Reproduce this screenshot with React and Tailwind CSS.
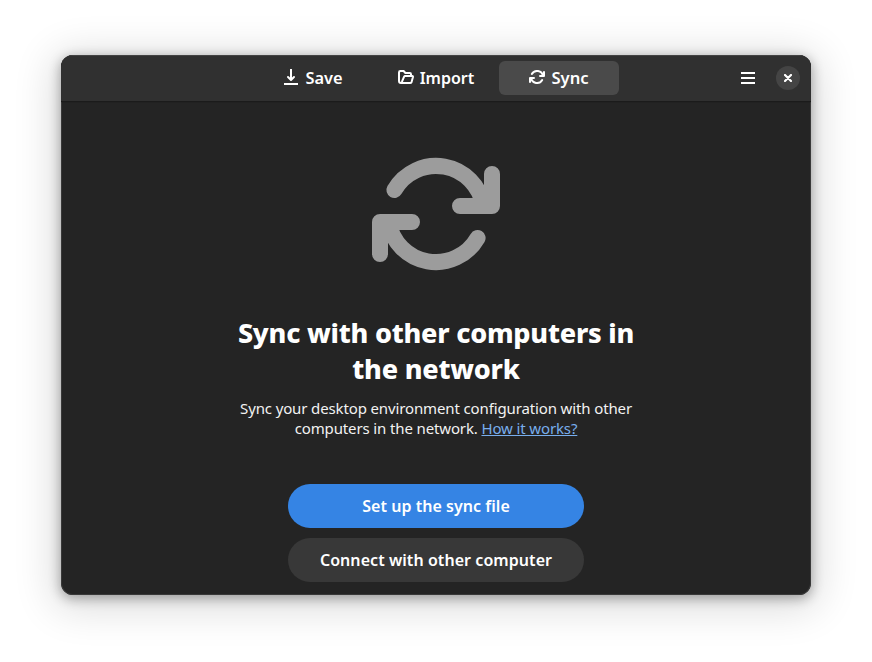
import React from "react";

function SyncIcon({ className }) {
  return (
    <svg
      viewBox="0 0 16 16"
      className={className}
      fill="none"
      stroke="currentColor"
      strokeWidth="2"
      strokeLinecap="round"
      strokeLinejoin="round"
    >
      <path d="M2.8 5A6 6 0 0 1 13.92 7M15 3V7H11" />
      <path d="M13.2 11A6 6 0 0 1 2.08 9M1 13V9H5" />
    </svg>
  );
}

function SaveIcon() {
  return (
    <svg viewBox="0 0 16 16" className="mb-0.5 size-4" fill="none" stroke="currentColor" strokeWidth="2">
      <path d="M8 0V10" />
      <path d="M5 8L8 11L11 8" strokeLinecap="round" strokeLinejoin="round" />
      <path d="M1 15H15" />
    </svg>
  );
}

function FolderIcon() {
  return (
    <svg viewBox="0 0 16 16" className="mb-0.5 size-4" fill="none" stroke="currentColor" strokeWidth="2" strokeLinejoin="round" strokeLinecap="round">
      <path d="M13 6V5.2Q13 4 11.9 4H7.4L5.6 2H2.4Q1 2 1 3.4V11.8Q1 14 3 14H12.2Q13.1 14 13.5 13.2L14.9 8.2Q15.2 7 14.2 7H7.3Q6.4 7 6 7.9L4.1 12.4" />
    </svg>
  );
}

function Tab({ icon, label, active, textClass }) {
  return (
    <button
      className={`flex h-[34px] w-[120px] items-center justify-center gap-1.5 rounded-md ${active ? "bg-[#4a4a4a]" : ""}`}
    >
      {icon}
      <span className={`leading-5 font-semibold ${textClass}`}>{label}</span>
    </button>
  );
}

export default function App() {
  return (
    <div className="h-[662px] w-[872px] overflow-hidden bg-white px-[61px] pt-[55px] font-['Noto_Sans',sans-serif] text-white">
      <div className="flex h-[540px] w-[750px] flex-col overflow-hidden rounded-xl bg-[#242424] shadow-[0_3px_12px_1px_rgba(0,0,0,0.3),0_6px_40px_8px_rgba(0,0,0,0.14),inset_0_0_0_1px_#393939]">
        <header className="flex h-[46px] shrink-0 items-center border-t border-[#444444] bg-[#303030] pr-[11px] pb-px pl-[192px] shadow-[0_1px_1px_#1b1b1b]">
          <nav className="flex gap-[3px]">
            <Tab icon={<SaveIcon />} label="Save" textClass="text-[16.4px]" />
            <Tab icon={<FolderIcon />} label="Import" textClass="text-[16px]" />
            <Tab icon={<SyncIcon className="mb-0.5 size-4" />} label="Sync" active textClass="text-[16.6px]" />
          </nav>
          <div className="ml-auto flex items-center gap-[21px]">
            <div className="flex w-3.5 flex-col gap-[3px]">
              <i className="h-0.5 bg-white" />
              <i className="h-0.5 bg-white" />
              <i className="h-0.5 bg-white" />
            </div>
            <button className="flex size-6 items-center justify-center rounded-full bg-[#444444]">
              <svg viewBox="0 0 8 8" className="size-2" stroke="white" strokeWidth="2.2" strokeLinecap="round">
                <path d="M1 1L7 7M7 1L1 7" />
              </svg>
            </button>
          </div>
        </header>
        <main className="flex flex-col items-center pt-[49px]">
          <SyncIcon className="size-32 text-[#9c9c9c]" />
          <h1 className="mt-[37px] text-center text-[27px] leading-9 font-extrabold tracking-[-0.22px] whitespace-nowrap">
            <span>Sync with other computers in</span>
            <br />
            <span>the network</span>
          </h1>
          <p className="mt-[11px] text-center text-[15px] leading-5 tracking-[-0.13px] whitespace-nowrap text-[#f2f2f2]">
            <span>Sync your desktop environment configuration with other</span>
            <br />
            <span>
              computers in the network. <a className="text-[#78aeed] underline">How it works?</a>
            </span>
          </p>
          <button className="mt-[46px] h-11 w-[296px] rounded-full bg-[#3584e4] text-[16px] font-semibold tracking-[0.04px]">
            Set up the sync file
          </button>
          <button className="mt-2.5 h-11 w-[296px] rounded-full bg-[#383838] text-[16px] font-semibold tracking-[0.06px]">
            Connect with other computer
          </button>
        </main>
      </div>
    </div>
  );
}
